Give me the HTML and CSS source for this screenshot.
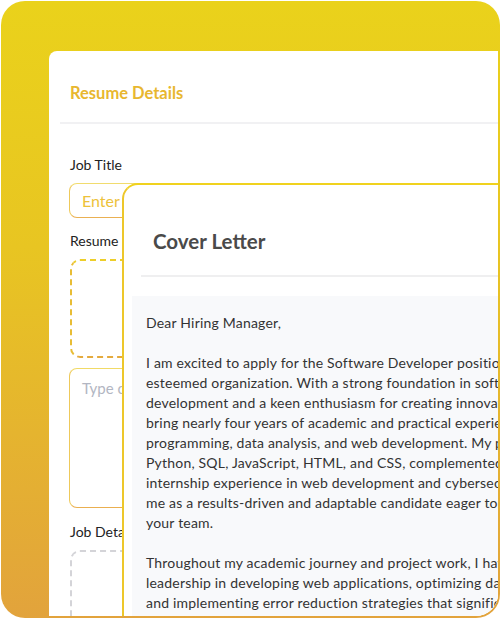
FILE: index.html
```html
<!DOCTYPE html>
<html>
<head>
<meta charset="utf-8">
<link rel="stylesheet" href="styles.css">
</head>
<body>
<div class="frame">
  <div class="clip">
    <div class="card">
      <div class="card-head">Resume Details</div>
      <div class="card-body">
        <div class="label">Job Title</div>
        <div class="input"><span class="ph-yellow">Enter Job Title</span></div>
        <div class="label gap-13">Resume</div>
        <div class="drop drop-yellow"></div>
        <div class="textarea"><span class="ph-gray">Type or paste your resume</span></div>
        <div class="label gap-14">Job Details</div>
        <div class="drop drop-gray"></div>
      </div>
    </div>
    <div class="cover">
      <div class="cover-head">Cover Letter</div>
      <div class="cover-body">
        <p>Dear Hiring Manager,</p>
        <p>I am excited to apply for the Software Developer position at your<br>esteemed organization. With a strong foundation in software<br>development and a keen enthusiasm for creating innovative solutions, I<br>bring nearly four years of academic and practical experience in<br>programming, data analysis, and web development. My proficiency in<br>Python, SQL, JavaScript, HTML, and CSS, complemented by hands-on<br>internship experience in web development and cybersecurity, positions<br>me as a results-driven and adaptable candidate eager to contribute to<br>your team.</p>
        <p>Throughout my academic journey and project work, I have demonstrated<br>leadership in developing web applications, optimizing database queries,<br>and implementing error reduction strategies that significantly improved<br>system reliability and performance.</p>
      </div>
    </div>
  </div>
</div>
</body>
</html>
```

FILE: styles.css
```css
* { box-sizing: border-box; }
html, body { margin: 0; padding: 0; background: #ffffff; }
body { font-family: Lato, "Open Sans", sans-serif; }

.frame {
  width: 499px;
  height: 617px;
  margin: 1px 0 0 1px;
  border-radius: 24px;
  background: linear-gradient(180deg, #EAD21B 0%, #E8C522 40%, #E2A33C 100%);
  padding: 0 2px 2px 0;
}

.clip {
  position: relative;
  height: 100%;
  overflow: hidden;
  border-radius: 0 22px 22px 0;
  padding: 50px 0 0 48px;
}

.card {
  background: #ffffff;
  border-radius: 8px 0 0 0;
  height: 100%;
  padding-left: 11px;
}

.card-head {
  padding: 31px 10px 18px;
  line-height: 22px;
  font-size: 16.5px;
  font-weight: 700;
  color: #E8B72F;
  border-bottom: 2px solid #F1F1F3;
}

.card-body {
  padding: 31px 20px 0 10px;
}

.label {
  font-size: 14px;
  line-height: 20px;
  color: #222222;
}
.gap-13 { margin-top: 13px; }
.gap-14 { margin-top: 14px; }

.input {
  margin-top: 8px;
  margin-left: -1px;
  height: 35px;
  border: 1px solid #EEC95A;
  border-top-color: #F1DC6E;
  border-bottom-color: #EAB052;
  border-radius: 8px;
  padding: 0 12px;
  display: flex;
  align-items: center;
}
.ph-yellow {
  font-size: 16px;
  color: #EDC23A;
  white-space: nowrap;
}

.drop {
  margin-top: 8px;
  height: 99px;
  border: 2px dashed #E8BD35;
  border-radius: 10px;
}
.drop-yellow {
  border-top-color: #EDCE2A;
  border-bottom-color: #E4AA3E;
}
.drop-gray {
  height: 120px;
  border-color: #D4D4D8;
}

.textarea {
  margin-top: 10px;
  margin-left: -1px;
  height: 140px;
  border: 1px solid #EEC95A;
  border-top-color: #F1DA66;
  border-bottom-color: #EAAF50;
  border-radius: 8px;
  padding: 8px 12px;
  line-height: 22px;
}
.ph-gray {
  font-size: 15px;
  color: #B2B6C2;
  white-space: nowrap;
}

.cover {
  position: absolute;
  left: 121px;
  top: 182px;
  width: 420px;
  height: 520px;
  background: #ffffff;
  border: 2px solid #F0D21E;
  border-left-color: #EDC72A;
  border-radius: 16px 0 0 0;
  padding-left: 8px;
}

.cover-head {
  margin-left: 9px;
  padding: 42px 12px 20px;
  line-height: 28px;
  font-size: 20.5px;
  font-weight: 700;
  color: #4A4A4A;
  border-bottom: 2px solid #EFEFF0;
}

.cover-body {
  margin-top: 19px;
  background: #F8F9FB;
  height: 400px;
  padding: 17px 14px 0;
  font-size: 14px;
  letter-spacing: 0.2px;
  line-height: 20px;
  color: #333333;
  white-space: nowrap;
}
.cover-body p { margin: 0 0 20px; }
```
